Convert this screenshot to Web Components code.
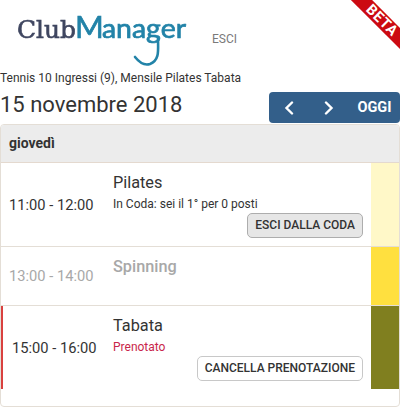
<!DOCTYPE html>
<html lang="it">
<head>
<meta charset="utf-8">
<title>ClubManager</title>
<style>
	html, body { margin: 0; padding: 0; background: #fff; }
	body { font-family: Roboto, sans-serif; color: #333; width: 400px; height: 407px; overflow: hidden; position: relative; }
</style>
</head>
<body>
<beta-ribbon>BETA</beta-ribbon>
<club-header></club-header>
<date-bar>15 novembre 2018</date-bar>
<day-card label="giovedì">
	<lesson-row time="11:00 - 12:00" title="Pilates" color="#fff8c8" height="84">
		<span>In Coda: sei il 1° per 0 posti</span>
		<action-button slot="action" filled>ESCI DALLA CODA</action-button>
	</lesson-row>
	<lesson-row time="13:00 - 14:00" title="Spinning" color="#ffe03f" height="59" muted></lesson-row>
	<lesson-row time="15:00 - 16:00" title="Tabata" color="#807f1f" height="83" booked last>
		<span style="color:#c9264a">Prenotato</span>
		<action-button slot="action">CANCELLA PRENOTAZIONE</action-button>
	</lesson-row>
</day-card>

<script>
class BetaRibbon extends HTMLElement {
	constructor() {
		super();
		this.attachShadow({mode: 'open'}).innerHTML = `
			<style>
				:host { position: absolute; top: 0; right: 0; width: 60px; height: 60px; overflow: hidden; display: block; z-index: 2; }
				div {
					position: absolute; top: 13px; left: -8.5px; width: 100px; height: 15px;
					transform: rotate(45deg);
					background: #cc0a12; color: #fff;
					display: flex; align-items: center; justify-content: center;
				}
				span { font: 700 14.5px/12px Roboto, sans-serif; letter-spacing: .7px; }
			</style>
			<div><span><slot></slot></span></div>`;
	}
}
customElements.define('beta-ribbon', BetaRibbon);

class ClubHeader extends HTMLElement {
	constructor() {
		super();
		this.attachShadow({mode: 'open'}).innerHTML = `
			<style>
				:host { display: block; }
				.top { display: flex; align-items: flex-start; height: 71px; }
				svg { display: block; flex: none; filter: blur(.35px); }
				.out { margin: 32px 0 0 25px; font-size: 12px; line-height: 14px; color: #7a7a7a; }
				.packs { font-size: 12px; line-height: 14px; color: #333; white-space: nowrap; }
			</style>
			<div class="top">
				<svg width="187" height="70" viewBox="0 0 187 70">
					<text x="17" y="38" font-family="DejaVu Serif, serif" font-size="24" fill="#3f4660" stroke="#3f4660" stroke-width=".6" textLength="59" lengthAdjust="spacingAndGlyphs">Club</text>
					<text y="38" font-family="Lato, sans-serif" fill="#2283a8" stroke="#2283a8" stroke-width=".7"><tspan x="75" font-size="31">M</tspan><tspan x="102" font-size="26" textLength="84" lengthAdjust="spacingAndGlyphs">anager</tspan></text>
					<path d="M158 38 C158 50 160 60 150 64 C144 66 139 62 135 57" fill="none" stroke="#2283a8" stroke-width="2.6" stroke-linecap="round"/>
				</svg>
				<span class="out">ESCI</span>
			</div>
			<div class="packs">Tennis 10 Ingressi (9), Mensile Pilates Tabata</div>`;
	}
}
customElements.define('club-header', ClubHeader);

class DateBar extends HTMLElement {
	constructor() {
		super();
		this.attachShadow({mode: 'open'}).innerHTML = `
			<style>
				:host { display: flex; justify-content: space-between; align-items: flex-start; height: 32px; margin-top: 7px; }
				.date { font-size: 22px; line-height: 26px; color: #333; }
				.nav { display: flex; align-items: center; width: 131px; height: 31px; background: #335f8a; border-radius: 4px; color: #fff; }
				button { all: unset; display: flex; align-items: center; justify-content: center; height: 31px; }
				.arrow { width: 40px; }
				.today { font-weight: 700; font-size: 14.5px; width: 51px; }
				svg { display: block; }
			</style>
			<span class="date"><slot></slot></span>
			<div class="nav">
				<button class="arrow"><svg width="10" height="14" viewBox="0 0 10 14"><path d="M8 1.5 2.5 7 8 12.5" fill="none" stroke="#fff" stroke-width="2.4" stroke-linecap="round"/></svg></button>
				<button class="arrow"><svg width="10" height="14" viewBox="0 0 10 14"><path d="M2 1.5 7.5 7 2 12.5" fill="none" stroke="#fff" stroke-width="2.4" stroke-linecap="round"/></svg></button>
				<button class="today">OGGI</button>
			</div>`;
	}
}
customElements.define('date-bar', DateBar);

class DayCard extends HTMLElement {
	constructor() {
		super();
		this.attachShadow({mode: 'open'}).innerHTML = `
			<style>
				:host { display: block; box-sizing: border-box; height: 283px; border: 1px solid #e4ded6; border-radius: 4px; overflow: hidden; }
				.head { height: 38px; box-sizing: border-box; border-bottom: 1px solid #e4d9cf; background: #ececec; padding: 0 8px; font-weight: 700; font-size: 14px; line-height: 37px; color: #333; }
			</style>
			<div class="head"></div>
			<slot></slot>`;
		this.shadowRoot.querySelector('.head').textContent = this.getAttribute('label');
	}
}
customElements.define('day-card', DayCard);

class LessonRow extends HTMLElement {
	constructor() {
		super();
		const shadow = this.attachShadow({mode: 'open'});
		shadow.innerHTML = `
			<style>
				:host { display: grid; grid-template-columns: 1fr 28px; box-sizing: border-box; border-bottom: 1px solid #e4ded6; }
				:host([last]) { border-bottom: 0; }
				.main { display: grid; grid-template-columns: 112px 1fr; box-sizing: border-box; padding-right: 8px; }
				.time { font-size: 14.7px; display: flex; align-items: center; justify-content: flex-start; padding-left: 8px; color: #333; }
				.body { padding-top: 9px; display: flex; flex-direction: column; font-size: 12px; line-height: 16px; color: #333; }
				.title { font-size: 16.3px; line-height: 22px; margin-bottom: 2px; }
				.act { display: flex; justify-content: flex-end; margin-top: 1px; }
				:host([muted]) .time, :host([muted]) .title { color: #a8a8a8; }
				:host([muted]) .title { font-weight: 500; }
				:host([booked]) .main { border-left: 2px solid #d9413f; grid-template-columns: 110px 1fr; }
				:host([booked]) .time { padding-left: 9px; }
			</style>
			<div class="main">
				<div class="time"></div>
				<div class="body">
					<div class="title"></div>
					<slot></slot>
					<div class="act"><slot name="action"></slot></div>
				</div>
			</div>
			<div class="strip"></div>`;
		shadow.querySelector('.time').textContent = this.getAttribute('time');
		shadow.querySelector('.title').textContent = this.getAttribute('title');
		shadow.querySelector('.strip').style.background = this.getAttribute('color');
		this.style.height = this.getAttribute('height') + 'px';
	}
}
customElements.define('lesson-row', LessonRow);

class ActionButton extends HTMLElement {
	constructor() {
		super();
		this.attachShadow({mode: 'open'}).innerHTML = `
			<style>
				:host { display: inline-block; box-sizing: border-box; height: 25px; padding: 0 7px; border: 1px solid #c8c8c8; border-radius: 5px; background: #fff; font-weight: 500; font-size: 12px; line-height: 23px; color: #333; white-space: nowrap; }
				:host([filled]) { background: #e6e6e6; border-color: #adadad; }
			</style>
			<slot></slot>`;
	}
}
customElements.define('action-button', ActionButton);
</script>
</body>
</html>
